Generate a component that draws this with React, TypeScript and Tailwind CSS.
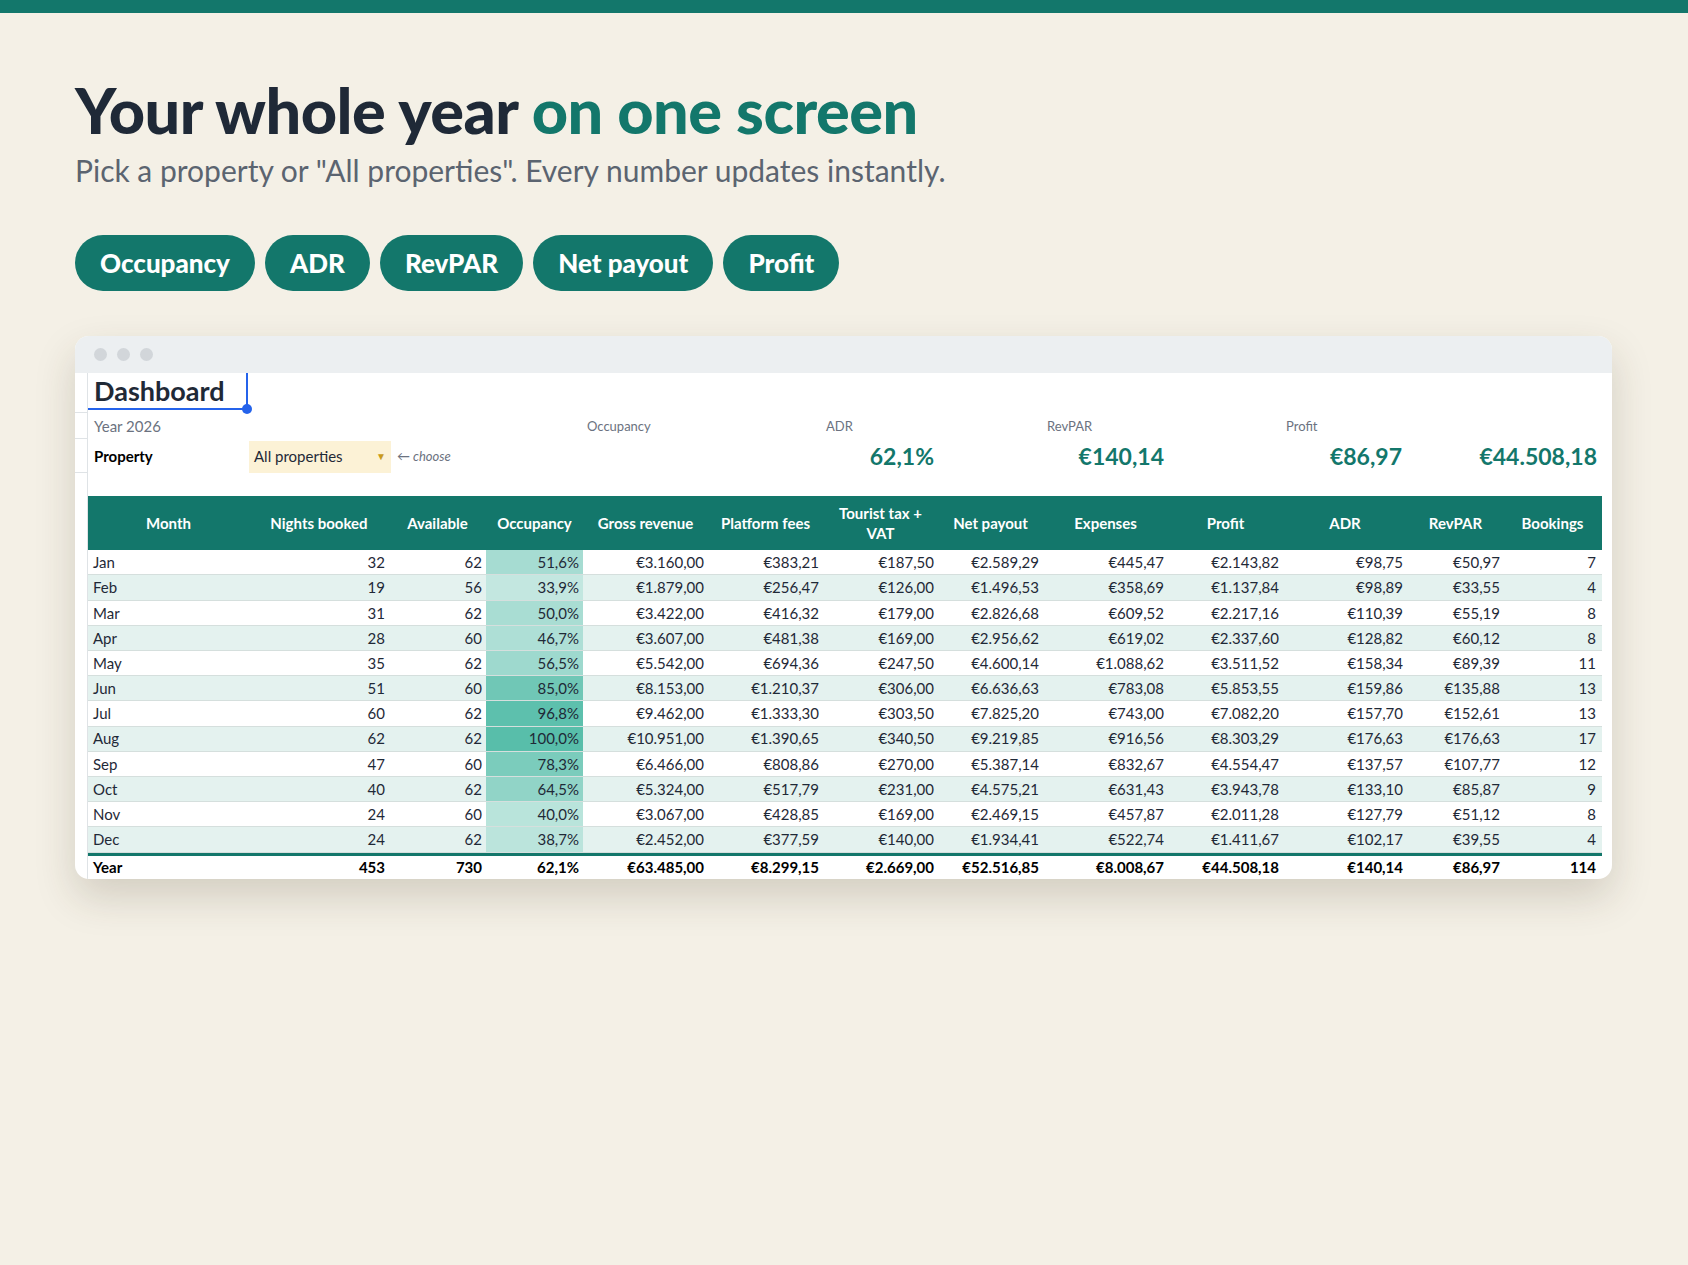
import React from "react";

const cols = "grid-cols-[161px_140px_97px_97px_125px_115px_115px_105px_125px_115px_124px_97px_97px]";
const rows: [string, number, number, number, string, string, string, string, string, string, string, string, number][] = [
  ["Jan", 32, 62, 51.6, "€3.160,00", "€383,21", "€187,50", "€2.589,29", "€445,47", "€2.143,82", "€98,75", "€50,97", 7],
  ["Feb", 19, 56, 33.9, "€1.879,00", "€256,47", "€126,00", "€1.496,53", "€358,69", "€1.137,84", "€98,89", "€33,55", 4],
  ["Mar", 31, 62, 50.0, "€3.422,00", "€416,32", "€179,00", "€2.826,68", "€609,52", "€2.217,16", "€110,39", "€55,19", 8],
  ["Apr", 28, 60, 46.7, "€3.607,00", "€481,38", "€169,00", "€2.956,62", "€619,02", "€2.337,60", "€128,82", "€60,12", 8],
  ["May", 35, 62, 56.5, "€5.542,00", "€694,36", "€247,50", "€4.600,14", "€1.088,62", "€3.511,52", "€158,34", "€89,39", 11],
  ["Jun", 51, 60, 85.0, "€8.153,00", "€1.210,37", "€306,00", "€6.636,63", "€783,08", "€5.853,55", "€159,86", "€135,88", 13],
  ["Jul", 60, 62, 96.8, "€9.462,00", "€1.333,30", "€303,50", "€7.825,20", "€743,00", "€7.082,20", "€157,70", "€152,61", 13],
  ["Aug", 62, 62, 100.0, "€10.951,00", "€1.390,65", "€340,50", "€9.219,85", "€916,56", "€8.303,29", "€176,63", "€176,63", 17],
  ["Sep", 47, 60, 78.3, "€6.466,00", "€808,86", "€270,00", "€5.387,14", "€832,67", "€4.554,47", "€137,57", "€107,77", 12],
  ["Oct", 40, 62, 64.5, "€5.324,00", "€517,79", "€231,00", "€4.575,21", "€631,43", "€3.943,78", "€133,10", "€85,87", 9],
  ["Nov", 24, 60, 40.0, "€3.067,00", "€428,85", "€169,00", "€2.469,15", "€457,87", "€2.011,28", "€127,79", "€51,12", 8],
  ["Dec", 24, 62, 38.7, "€2.452,00", "€377,59", "€140,00", "€1.934,41", "€522,74", "€1.411,67", "€102,17", "€39,55", 4],
];

function heat(v: number) {
  const t = Math.max(0, Math.min(1, (v - 33) / 67));
  const a = [196, 232, 225], b = [88, 190, 170];
  const c = a.map((x, i) => Math.round(x + (b[i] - x) * t));
  return `rgb(${c[0]},${c[1]},${c[2]})`;
}

const headers = ["Month", "Nights booked", "Available", "Occupancy", "Gross revenue", "Platform fees", "Tourist tax +\nVAT", "Net payout", "Expenses", "Profit", "ADR", "RevPAR", "Bookings"];

export default function App() {
  return (
    <div className="min-h-[1265px] w-full bg-[#f4f0e6]" style={{ fontFamily: "Lato, 'Noto Sans', sans-serif" }}>
      <div className="h-[13px] bg-[#13776b]" />
      <div className="px-[75px] pt-[62px]">
        <h1 className="text-[63px] font-black leading-[1.1] tracking-[-0.5px] text-[#1f2937]">
          Your whole year <span className="text-[#13776b]">on one screen</span>
        </h1>
        <p className="mt-[4px] text-[30px] text-[#5b6470]">Pick a property or "All properties". Every number updates instantly.</p>
        <div className="mt-[42px] flex gap-[10px]">
          {["Occupancy", "ADR", "RevPAR", "Net payout", "Profit"].map((p) => (
            <div key={p} className="flex h-[56px] items-center rounded-full bg-[#13776b] px-[25px] text-[26px] font-black text-white">{p}</div>
          ))}
        </div>
        <div className="mt-[45px] w-[1537px] overflow-hidden rounded-[14px] bg-white shadow-[0_18px_40px_rgba(60,50,30,0.18)]">
          <div className="flex h-[37px] items-center gap-[10px] bg-[#eceff1] px-[19px]">
            <span className="h-[13px] w-[13px] rounded-full bg-[#d2d6da]" />
            <span className="h-[13px] w-[13px] rounded-full bg-[#d2d6da]" />
            <span className="h-[13px] w-[13px] rounded-full bg-[#d2d6da]" />
          </div>
          <div className="flex" style={{ fontFamily: "Lato, 'Open Sans', sans-serif" }}>
            <div className="flex w-[13px] flex-col border-r border-[#dfe3e6]">
              <div className="h-[40px] border-b border-[#dfe3e6]" />
              <div className="h-[26px] border-b border-[#dfe3e6]" />
              <div className="h-[34px] border-b border-[#dfe3e6]" />
              <div className="h-[23px]" />
            </div>
            <div className="w-[1514px]">
              <div className="relative h-[40px]">
                <div className="relative inline-flex h-[37px] w-[160px] items-center border-b-2 border-r-2 border-[#2563eb] pl-[6px] text-[27px] font-bold text-[#1f2937]">
                  Dashboard
                  <span className="absolute -bottom-[6px] -right-[6px] h-[10px] w-[10px] rounded-full bg-[#2563eb]" />
                </div>
              </div>
              <div className={`grid ${cols} h-[26px] items-center text-[13px] text-[#6b7280]`}>
                <div className="pl-[6px] text-[15px]">Year 2026</div>
                <div /><div /><div />
                <div className="col-span-2 pl-[4px]">Occupancy</div>
                <div className="col-span-2 pl-[3px]">ADR</div>
                <div className="col-span-2 pl-[4px]">RevPAR</div>
                <div className="col-span-2 pl-[3px]">Profit</div>
              </div>
              <div className={`grid ${cols} h-[34px] items-center`}>
                <div className="pl-[6px] text-[15px] font-bold text-black">Property</div>
                <div className="col-span-2 flex items-center gap-[6px]">
                  <div className="flex h-[32px] w-[142px] items-center justify-between bg-[#fcf2d6] px-[5px] text-[15px] text-[#1f2937]">
                    All properties <span className="text-[10px] text-[#c99a1c]">▼</span>
                  </div>
                  <span className="text-[13px] italic text-[#6b7280]">← choose</span>
                </div>
                <div /><div />
                <div className="col-span-2 pr-[4px] text-right text-[23px] font-bold text-[#13776b]">62,1%</div>
                <div className="col-span-2 pr-[4px] text-right text-[23px] font-bold text-[#13776b]">€140,14</div>
                <div className="col-span-2 pr-[5px] text-right text-[23px] font-bold text-[#13776b]">€86,97</div>
                <div className="col-span-2 pr-[4px] text-right text-[23px] font-bold text-[#13776b]">€44.508,18</div>
              </div>
              <div className="h-[23px]" />
              <div className={`grid ${cols} h-[54px] items-center bg-[#13776b] text-center text-[15px] font-bold leading-[20px] text-white`}>
                {headers.map((h) => (
                  <div key={h} className="whitespace-pre-line">{h}</div>
                ))}
              </div>
              <div className="text-[15px] text-[#1f2937]">
                {rows.map((r, i) => (
                  <div key={r[0]} className={`grid ${cols} h-[25.2px] items-center border-b border-[#d5dfdd] ${i % 2 ? "bg-[#e4f2ef]" : "bg-white"}`}>
                    <div className="pl-[5px]">{r[0]}</div>
                    <div className="pr-[4px] text-right">{r[1]}</div>
                    <div className="pr-[4px] text-right">{r[2]}</div>
                    <div className="flex h-full items-center justify-end pr-[4px]" style={{ background: heat(r[3]) }}>{r[3].toFixed(1).replace(".", ",")}%</div>
                    {r.slice(4, 12).map((v, j) => (
                      <div key={j} className="pr-[4px] text-right">{v as string}</div>
                    ))}
                    <div className="pr-[5px] text-right">{r[12]}</div>
                  </div>
                ))}
                <div className={`grid ${cols} h-[26px] items-center border-t-[3px] border-[#13776b] font-bold text-black`}>
                  <div className="pl-[5px]">Year</div>
                  {["453", "730", "62,1%", "€63.485,00", "€8.299,15", "€2.669,00", "€52.516,85", "€8.008,67", "€44.508,18", "€140,14", "€86,97"].map((v) => (
                    <div key={v} className="pr-[4px] text-right">{v}</div>
                  ))}
                  <div className="pr-[5px] text-right">114</div>
                </div>
              </div>
            </div>
          </div>
        </div>
      </div>
    </div>
  );
}
